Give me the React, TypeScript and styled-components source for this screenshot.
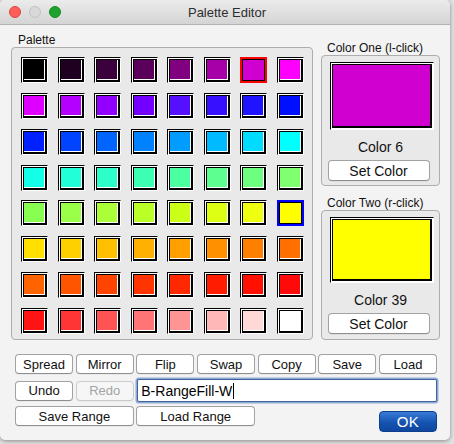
import * as React from "react";
import styled, { createGlobalStyle, css } from "styled-components";

const GlobalStyle = createGlobalStyle`
  html, body {
    margin: 0;
    padding: 0;
    background: #e2e2e2;
  }
  body {
    font-family: "Liberation Sans", Arial, sans-serif;
    width: 454px;
    height: 444px;
    overflow: hidden;
  }
`;

const PALETTE = [
  "#000000", "#200020", "#3c003c", "#5a005a", "#800080", "#a800a8", "#d000d0", "#ff00ff",
  "#dd00ff", "#b400ff", "#9200ff", "#7300ff", "#5410ff", "#3610ff", "#1e14ff", "#0010ff",
  "#0020ff", "#0044ff", "#0064ff", "#0082ff", "#009cff", "#00baff", "#00dcff", "#00ffff",
  "#14ffe8", "#20ffd8", "#2cffc8", "#3cffb4", "#4cffa0", "#5cff90", "#6cff80", "#80ff70",
  "#88ff50", "#99ff48", "#aaff38", "#bbff28", "#ccff18", "#ddff14", "#eeff10", "#ffff00",
  "#ffe000", "#ffd000", "#ffc000", "#ffb000", "#ffa000", "#ff9000", "#ff8000", "#ff7000",
  "#ff6400", "#ff5400", "#ff4400", "#ff3400", "#ff2800", "#ff1c00", "#ff1000", "#ff0a0a",
  "#ff1414", "#ff3434", "#ff5454", "#ff7474", "#ff9494", "#ffb8b8", "#ffd8d8", "#ffffff",
];

const COLOR_ONE = 6;
const COLOR_TWO = 39;

const Window = styled.div`
  width: 450px;
  height: 440px;
  background: #f3f3f3;
  border-radius: 5px;
  box-shadow: 0 1px 4px rgba(0, 0, 0, 0.4);
  overflow: hidden;
  display: flex;
  flex-direction: column;
`;

const TitleBar = styled.div`
  height: 25px;
  box-sizing: border-box;
  border-bottom: 1px solid #b1b1b1;
  background: linear-gradient(#ebebeb, #d4d4d4);
  display: grid;
  grid-template-columns: 1fr auto 1fr;
  align-items: center;
  padding: 0 9px;
`;

const Lights = styled.div`
  display: flex;
  gap: 8px;
`;

const Light = styled.span<{ $color: string; $edge: string }>`
  width: 12px;
  height: 12px;
  box-sizing: border-box;
  border-radius: 50%;
  background: ${(p) => p.$color};
  border: 1px solid ${(p) => p.$edge};
`;

const Title = styled.div`
  font-size: 13px;
  color: #2e2e2e;
  padding-left: 4px;
`;

const Body = styled.div`
  padding: 8px 10px 0 11px;
  display: flex;
  flex-direction: column;
`;

const TopArea = styled.div`
  display: flex;
  gap: 8px;
`;

const Column = styled.div<{ $top?: number }>`
  display: flex;
  flex-direction: column;
  margin-top: ${(p) => p.$top ?? 0}px;
`;

const GroupLabel = styled.div<{ $indent: number }>`
  font-size: 12px;
  line-height: 14px;
  color: #111;
  padding-left: ${(p) => p.$indent}px;
`;

const GroupBox = styled.div<{ $w: number; $h: number }>`
  box-sizing: border-box;
  width: ${(p) => p.$w}px;
  height: ${(p) => p.$h}px;
  border: 1px solid #adadad;
  border-radius: 4px;
  background: #e9e9e9;
`;

const PaletteBox = styled(GroupBox)`
  padding: 9px;
`;

const SwatchGrid = styled.div`
  width: 283px;
  height: 277px;
  display: grid;
  grid-template-columns: repeat(8, 27px);
  grid-template-rows: repeat(8, 26px);
  justify-content: space-between;
  align-content: space-between;
`;

const SwatchFrame = styled.div<{ $mark?: string }>`
  box-sizing: border-box;
  border-style: solid;
  border-width: 1px;
  border-color: #000 #fff #fff #000;
  padding: 1px 0 0 1px;
  background: #fff;
  ${(p) =>
    p.$mark &&
    css`
      border: 2px solid ${p.$mark};
      padding: 0;
    `}
`;

const SwatchFill = styled.div<{ $color: string; $bold?: boolean }>`
  box-sizing: border-box;
  height: 100%;
  border: 1px solid #000;
  border-right-width: 2px;
  border-bottom-width: 2px;
  background: ${(p) => p.$color};
  box-shadow: inset -1px -1px 0 #fff;
  ${(p) =>
    p.$bold &&
    css`
      border-width: 1px;
      box-shadow: none;
    `}
`;

const ColorBox = styled(GroupBox)`
  display: flex;
  flex-direction: column;
  align-items: center;
  padding-top: 6px;
`;

const Preview = styled.div<{ $h: number }>`
  box-sizing: border-box;
  width: 104px;
  height: ${(p) => p.$h}px;
  border-style: solid;
  border-width: 1px;
  border-color: #000 #fff #fff #000;
  background: #fff;
  padding: 1px;
  margin-left: 2px;
`;

const PreviewFill = styled.div<{ $color: string }>`
  box-sizing: border-box;
  height: 100%;
  border: 1px solid #000;
  border-right-width: 2px;
  border-bottom-width: 2px;
  background: ${(p) => p.$color};
`;

const Caption = styled.div`
  font-size: 14px;
  line-height: 15px;
  color: #111;
  margin-top: 10px;
`;

const Button = styled.button<{ $w?: number; $disabled?: boolean }>`
  box-sizing: border-box;
  height: 20px;
  ${(p) => p.$w && css`width: ${p.$w}px;`}
  padding: 0;
  margin: 0;
  border: 1px solid #a2a2a2;
  border-bottom-color: #8e8e8e;
  border-radius: 4px;
  background: #fff;
  font-family: "Liberation Sans", Arial, sans-serif;
  font-size: 13px;
  color: #111;
  box-shadow: 0 0.5px 0 rgba(0, 0, 0, 0.08);
  ${(p) =>
    p.$disabled &&
    css`
      color: #a4a4a4;
      border-color: #cbcbcb;
      background: #f6f6f6;
    `}
`;

const SetColorButton = styled(Button)`
  width: 102px;
  height: 21px;
  margin-top: 5px;
  margin-left: -4px;
  font-size: 14px;
`;

const Controls = styled.div`
  margin: 14px 3px 0 4px;
  display: grid;
  grid-template-columns: repeat(7, 1fr);
  grid-template-rows: 20px 23px 25px;
  column-gap: 2.5px;
  row-gap: 5px;
  & > :nth-child(n + 11) {
    margin-top: -1px;
  }
`;

const Cell = styled.div<{ $span?: number; $col?: number; $align?: string }>`
  display: flex;
  grid-column: ${(p) => (p.$col ? `${p.$col} / ` : "")}span ${(p) => p.$span ?? 1};
  align-self: ${(p) => p.$align ?? "stretch"};
  & > * {
    flex: 1;
  }
`;

const TextField = styled.div`
  box-sizing: border-box;
  height: 23px;
  margin-left: 1px;
  border: 1px solid #41629a;
  border-radius: 2px;
  box-shadow: 0 0 0 1.5px #8eaad6;
  background: #fff;
  display: flex;
  align-items: center;
  padding-left: 3px;
  font-size: 14px;
  color: #000;
`;

const Caret = styled.span`
  display: inline-block;
  width: 1px;
  height: 16px;
  background: #000;
  margin-left: 1px;
`;

const OkButton = styled.button`
  box-sizing: border-box;
  height: 21px;
  padding: 0;
  border: 1px solid #0c3f8c;
  border-radius: 4px;
  background: linear-gradient(#3a7bd8, #1553b0 55%, #0f479f);
  color: #fff;
  font-family: "Liberation Sans", Arial, sans-serif;
  font-size: 15px;
  letter-spacing: 0.3px;
`;

function Swatch({ index, color }: { index: number; color: string }) {
  const mark = index === COLOR_ONE ? "#ff0000" : index === COLOR_TWO ? "#0000ff" : undefined;
  return (
    <SwatchFrame $mark={mark}>
      <SwatchFill $color={color} $bold={!!mark} />
    </SwatchFrame>
  );
}

function ColorPanel({
  label,
  index,
  boxHeight,
  previewHeight,
}: {
  label: string;
  index: number;
  boxHeight: number;
  previewHeight: number;
}) {
  return (
    <>
      <GroupLabel $indent={6}>{label}</GroupLabel>
      <ColorBox $w={119} $h={boxHeight}>
        <Preview $h={previewHeight}>
          <PreviewFill $color={PALETTE[index]} />
        </Preview>
        <Caption>Color {index}</Caption>
        <SetColorButton>Set Color</SetColorButton>
      </ColorBox>
    </>
  );
}

const TOOLS = ["Spread", "Mirror", "Flip", "Swap", "Copy", "Save", "Load"];

export default function App() {
  return (
    <>
      <GlobalStyle />
      <Window>
        <TitleBar>
          <Lights>
            <Light $color="#fc5f57" $edge="#e0443e" />
            <Light $color="#d9d9d9" $edge="#c2c2c2" />
            <Light $color="#1da32c" $edge="#168a23" />
          </Lights>
          <Title>Palette Editor</Title>
          <span />
        </TitleBar>
        <Body>
          <TopArea>
            <Column>
              <GroupLabel $indent={7}>Palette</GroupLabel>
              <PaletteBox $w={302} $h={293}>
                <SwatchGrid>
                  {PALETTE.map((c, i) => (
                    <Swatch key={i} index={i} color={c} />
                  ))}
                </SwatchGrid>
              </PaletteBox>
            </Column>
            <Column $top={8}>
              <ColorPanel label="Color One (l-click)" index={COLOR_ONE} boxHeight={131} previewHeight={68} />
              <div style={{ height: 10 }} />
              <ColorPanel label="Color Two (r-click)" index={COLOR_TWO} boxHeight={130} previewHeight={66} />
            </Column>
          </TopArea>
          <Controls>
            {TOOLS.map((t) => (
              <Cell key={t}>
                <Button>{t}</Button>
              </Cell>
            ))}
            <Cell $align="center">
              <Button>Undo</Button>
            </Cell>
            <Cell $align="center">
              <Button $disabled>Redo</Button>
            </Cell>
            <Cell $span={5}>
              <TextField>
                B-RangeFill-W
                <Caret />
              </TextField>
            </Cell>
            <Cell $span={2} $align="start">
              <Button>Save Range</Button>
            </Cell>
            <Cell $span={2} $align="start">
              <Button>Load Range</Button>
            </Cell>
            <Cell $col={7} $align="end">
              <OkButton>OK</OkButton>
            </Cell>
          </Controls>
        </Body>
      </Window>
    </>
  );
}
